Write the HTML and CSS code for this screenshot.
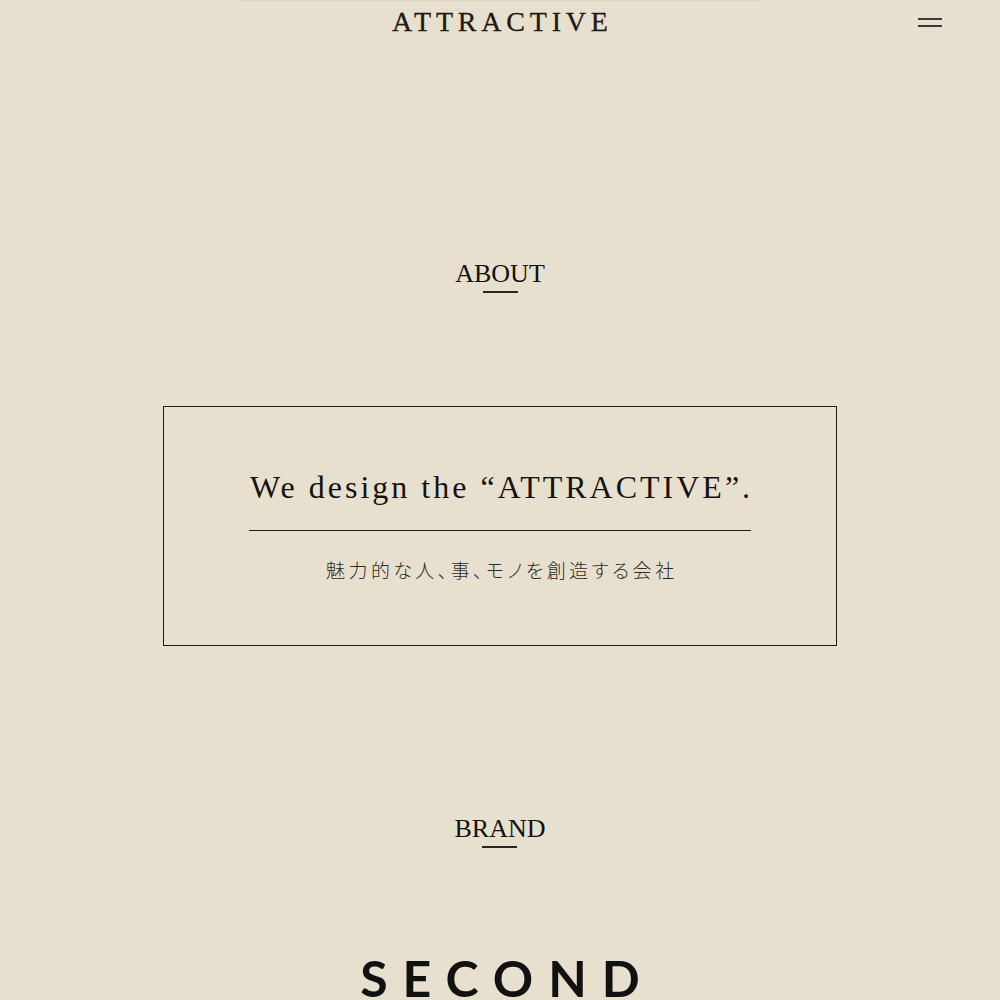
FILE: index.html
```html
<!DOCTYPE html>
<html lang="ja">
<head>
<meta charset="utf-8">
<title>ATTRACTIVE</title>
<link rel="stylesheet" href="styles.css">
</head>
<body>
<header class="site-header">
  <div class="topline"></div>
  <div class="header-row">
    <div class="header-side"></div>
    <h1 class="logo">ATTRACTIVE</h1>
    <div class="header-side header-right">
      <button class="menu-btn" aria-label="menu">
        <span class="menu-bar"></span>
        <span class="menu-bar"></span>
      </button>
    </div>
  </div>
</header>
<main>
  <section class="about">
    <h2 class="section-title">ABOUT</h2>
    <div class="concept">
      <p class="concept-en">We design the “ATTRACTIVE”.</p>
      <div class="concept-rule"></div>
      <p class="concept-ja">魅力的な人、事、モノを創造する会社</p>
    </div>
  </section>
  <section class="brand">
    <h2 class="section-title">BRAND</h2>
    <div class="brand-name">SECOND</div>
  </section>
</main>
</body>
</html>
```
FILE: styles.css
```css
html, body {
  margin: 0;
  padding: 0;
}
body {
  background: #e8e0ce;
  color: #1c1a18;
  font-family: "Liberation Serif", "Times New Roman", serif;
  overflow: hidden;
  height: 1000px;
}
.site-header {
  display: flex;
  flex-direction: column;
  align-items: center;
}
.topline {
  width: 528px;
  height: 1px;
  background: #ddd5c3;
}
.header-row {
  width: 100%;
  display: grid;
  grid-template-columns: 1fr auto 1fr;
  align-items: start;
}
.logo {
  margin: 5px 0 0;
  font-weight: normal;
  font-size: 28px;
  line-height: 32px;
  letter-spacing: 4.8px;
  padding-left: 4.8px;
  color: #1e1915;
  -webkit-text-stroke: 0.3px #1e1915;
}
.header-right {
  display: flex;
  justify-content: flex-end;
}
.menu-btn {
  margin: 17px 58px 0 0;
  padding: 0;
  border: 0;
  background: none;
  width: 24px;
  display: flex;
  flex-direction: column;
  gap: 5px;
}
.menu-bar {
  display: block;
  width: 24px;
  height: 2px;
  background: #3b3732;
}
main {
  display: flex;
  flex-direction: column;
  align-items: center;
}
.about, .brand {
  display: flex;
  flex-direction: column;
  align-items: center;
}
.about {
  padding-top: 221px;
}
.section-title {
  margin: 0;
  font-weight: normal;
  font-size: 26px;
  line-height: 30px;
  color: #111;
  display: flex;
  flex-direction: column;
  align-items: center;
}
.section-title::after {
  content: "";
  display: block;
  width: 35px;
  height: 2px;
  margin-top: 2px;
  background: #2a2622;
}
.concept {
  margin-top: 113px;
  width: 672px;
  border: 1px solid #1e1b18;
  display: flex;
  flex-direction: column;
  align-items: center;
  padding-top: 60px;
  box-sizing: content-box;
  height: 178px;
}
.concept-en {
  margin: 0;
  font-size: 32px;
  line-height: 40px;
  letter-spacing: 3px;
  padding-left: 3px;
  color: #151311;
}
.concept-rule {
  width: 502px;
  height: 1px;
  margin-top: 23px;
  background: #1e1b18;
}
.concept-ja {
  margin: 25px 0 0;
  font-family: "Noto Sans CJK JP", sans-serif;
  font-size: 19px;
  line-height: 28px;
  letter-spacing: 3.4px;
  padding-left: 3.4px;
  font-feature-settings: "palt";
  color: #2e2a26;
  font-weight: 300;
}
.brand {
  padding-top: 168px;
}
.brand-name {
  margin-top: 110px;
  font-family: "Lato", sans-serif;
  font-weight: 700;
  font-size: 50px;
  line-height: 40px;
  letter-spacing: 15px;
  padding-left: 15px;
  color: #111;
}
```
